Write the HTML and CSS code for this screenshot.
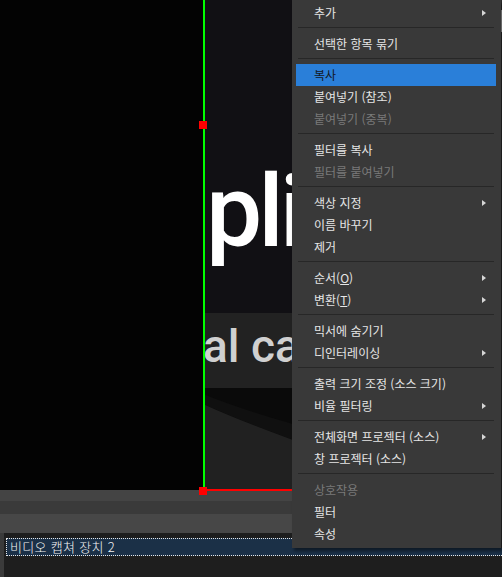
FILE: index.html
```html
<!DOCTYPE html>
<html lang="ko">
<head>
<meta charset="utf-8">
<link rel="stylesheet" href="styles.css">
</head>
<body>
<div class="app">
  <div class="preview">
    <div class="crop"></div>
    <div class="source">
      <div class="src-top"><span class="big">pli</span></div>
      <div class="src-band"><span class="mid">al ca</span></div>
      <div class="src-bottom">
        <svg class="curve" width="299" height="102" viewBox="0 0 299 102">
          <path d="M0,6 Q40,22 90,36 T299,62 L299,80 Q150,52 90,52 Q35,32 0,16 Z" fill="#101010"/>
          <path d="M0,16 Q35,32 90,52 T299,80 L299,102 L0,102 Z" fill="#212121"/>
        </svg>
      </div>
    </div>
    <div class="guide-v"></div>
    <div class="guide-h"></div>
    <div class="handle h-top"></div>
    <div class="handle h-bottom"></div>
  </div>
  <div class="strip s1"></div>
  <div class="strip s2"></div>
  <div class="strip s3"></div>
  <div class="sources">
    <div class="rail"></div>
    <div class="list">
      <div class="row">비디오 캡쳐 장치 2</div>
    </div>
  </div>
</div>

<div class="edge"><div class="thumb"></div></div>

<div class="menu">
  <div class="item sub"><span>추가</span><i class="arrow"></i></div>
  <div class="sep"></div>
  <div class="item"><span>선택한 항목 묶기</span></div>
  <div class="sep"></div>
  <div class="item active"><span>복사</span></div>
  <div class="item"><span>붙여넣기 (참조)</span></div>
  <div class="item disabled"><span>붙여넣기 (중복)</span></div>
  <div class="sep"></div>
  <div class="item"><span>필터를 복사</span></div>
  <div class="item disabled"><span>필터를 붙여넣기</span></div>
  <div class="sep"></div>
  <div class="item sub"><span>색상 지정</span><i class="arrow"></i></div>
  <div class="item"><span>이름 바꾸기</span></div>
  <div class="item"><span>제거</span></div>
  <div class="sep"></div>
  <div class="item sub"><span>순서(<u>O</u>)</span><i class="arrow"></i></div>
  <div class="item sub"><span>변환(<u>T</u>)</span><i class="arrow"></i></div>
  <div class="sep"></div>
  <div class="item"><span>믹서에 숨기기</span></div>
  <div class="item sub"><span>디인터레이싱</span><i class="arrow"></i></div>
  <div class="sep"></div>
  <div class="item"><span>출력 크기 조정 (소스 크기)</span></div>
  <div class="item sub"><span>비율 필터링</span><i class="arrow"></i></div>
  <div class="sep"></div>
  <div class="item sub"><span>전체화면 프로젝터 (소스)</span><i class="arrow"></i></div>
  <div class="item"><span>창 프로젝터 (소스)</span></div>
  <div class="sep"></div>
  <div class="item disabled"><span>상호작용</span></div>
  <div class="item"><span>필터</span></div>
  <div class="item"><span>속성</span></div>
</div>
</body>
</html>
```

FILE: styles.css
```css
html, body {
  margin: 0;
  padding: 0;
  width: 502px;
  height: 577px;
  overflow: hidden;
  background: #1e1e1e;
}

body {
  position: relative;
  font-family: "Noto Sans CJK KR", "Noto Sans", sans-serif;
}

.app {
  display: flex;
  flex-direction: column;
  width: 502px;
  height: 577px;
}

.preview {
  position: relative;
  display: flex;
  height: 490px;
  flex: none;
}

.crop {
  width: 203px;
  background: #030303;
}

.source {
  flex: 1;
  display: flex;
  flex-direction: column;
  overflow: hidden;
  background: #111014;
}

.src-top {
  height: 313px;
  box-sizing: border-box;
  padding-top: 162px;
  padding-left: 3px;
  flex: none;
}

.big {
  display: block;
  font-family: Roboto, "Noto Sans", sans-serif;
  font-weight: 500;
  font-size: 100px;
  line-height: 100px;
  letter-spacing: -4px;
  color: #ffffff;
  white-space: nowrap;
}

.src-band {
  height: 75px;
  box-sizing: border-box;
  padding-top: 10px;
  background: #222222;
  flex: none;
}

.mid {
  display: block;
  margin-left: 0;
  font-family: Roboto, "Noto Sans", sans-serif;
  font-weight: 500;
  font-size: 46px;
  line-height: 46px;
  color: #d0d0d0;
  white-space: nowrap;
}

.src-bottom {
  flex: 1;
  background: #0a0a0a;
}

.curve {
  display: block;
}

.guide-v {
  position: absolute;
  left: 203px;
  top: 0;
  width: 2px;
  height: 490px;
  background: #00ff00;
}

.guide-h {
  position: absolute;
  left: 207px;
  top: 489px;
  width: 90px;
  height: 2px;
  background: #ff0000;
}

.handle {
  position: absolute;
  left: 199px;
  width: 8px;
  height: 8px;
  background: #ff0000;
}

.h-top { top: 121px; }
.h-bottom { top: 487px; }

.strip { flex: none; }
.s1 { height: 11px; background: #444444; }
.s2 { height: 13px; background: #3a3a3a; }
.s3 { height: 19px; background: #474747; }

.sources {
  flex: 1;
  display: flex;
  background: #1e1e1e;
}

.rail {
  width: 4px;
  background: #3a3a3a;
}

.list {
  flex: 1;
  padding: 5px 0 0 2px;
  overflow: hidden;
}

.row {
  width: 520px;
  height: 18px;
  box-sizing: border-box;
  border: 1px dotted #e8e8e8;
  background: #1b3047;
  color: #f4f4f4;
  font-size: 13px;
  font-weight: 300;
  line-height: 16px;
  padding-left: 3px;
  letter-spacing: 0.3px;
  white-space: nowrap;
}

.edge {
  position: absolute;
  right: 0;
  top: 0;
  width: 1px;
  height: 548px;
  background: #2c2c2c;
}

.thumb {
  margin-top: 10px;
  height: 22px;
  background: #a8a8a8;
}

.menu {
  position: absolute;
  left: 292px;
  top: 0;
  width: 209px;
  height: 548px;
  box-sizing: border-box;
  padding: 2px 0 3px;
  background: #393939;
  box-shadow: 2px 3px 3px rgba(0, 0, 0, 0.45);
  font-size: 12px;
  color: #e6e6e6;
}

.item {
  display: flex;
  align-items: center;
  justify-content: space-between;
  height: 22px;
  margin: 0 5px 0 4px;
  padding: 0 10px 0 18px;
  line-height: 22px;
  white-space: nowrap;
}

.item u {
  text-decoration: underline;
  text-underline-offset: 1px;
}

.active {
  background: #2a7fd9;
  color: #14181e;
}

.disabled {
  color: #7a7a7a;
}

.arrow {
  display: block;
  width: 0;
  height: 0;
  border-left: 4px solid #d6d6d6;
  border-top: 3.5px solid transparent;
  border-bottom: 3.5px solid transparent;
}

.sep {
  height: 1px;
  margin: 3px 7px 5px 6px;
  background: #272727;
}
```
